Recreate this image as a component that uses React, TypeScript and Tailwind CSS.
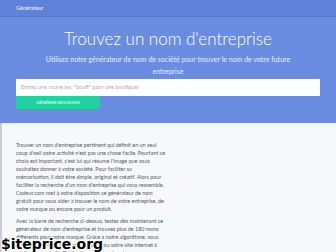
import React from "react";

const p1 = [
  "Trouver un nom d'entreprise pertinent qui définit en un seul",
  "coup d'oeil votre activité n'est pas une chose facile. Pourtant ce",
  "choix est important, c'est lui qui résume l'image que vous",
  "souhaitez donner à votre société. Pour faciliter sa",
  "mémorisation, il doit être simple, original et créatif. Alors pour",
  "faciliter la recherche d'un nom d'entreprise qui vous ressemble,",
  "Codeur.com met à votre disposition ce générateur de nom",
  "gratuit pour vous aider à trouver le nom de votre entreprise, de",
  "votre marque ou encore pour un produit.",
];
const p2 = [
  "Avec la barre de recherche ci-dessus, testez dès maintenant ce",
  "générateur de nom d'entreprise et trouvez plus de 180 noms",
  "différents pour votre marque. Grâce à notre algorithme, vous",
  "trouverez un nom pour votre société ou votre site internet à",
  "partir d'un mot-clé. Fini les heures pour chercher un nom pour",
];

export default function App() {
  return (
    <div className="relative w-[336px] h-[252px] overflow-hidden bg-[#f6f8fc]" style={{ fontFamily: "Lato, 'Open Sans', sans-serif" }}>
      <div className="h-[17px] bg-[#5f81d8] border-b border-[#5877cc] flex items-center pl-[16px]">
        <span className="text-[5.5px] text-white/90">Générateur</span>
      </div>
      <div className="bg-[#6a8de1] h-[106px] flex flex-col items-center">
        <h1 className="mt-[12px] text-[17px] leading-[20px] font-light text-white">Trouvez un nom d'entreprise</h1>
        <p className="mt-[4px] text-[7px] leading-[12px] text-[#e6ecfb] text-center w-[290px]">
          Utilisez notre générateur de nom de société pour trouver le nom de votre future<br />entreprise
        </p>
        <div className="self-stretch px-[16px] mt-[2px]">
          <div className="h-[17px] bg-white flex items-center pl-[5px] text-[5.5px] text-[#a8adb6]">
            Entrez une racine (ex: "bouff" pour une boutique)
          </div>
          <div className="w-[84px] h-[13px] bg-[#20d29f] flex items-center justify-center text-[4.6px] text-white tracking-tight">
            GÉNÉRER DES NOMS
          </div>
        </div>
      </div>
      <div className="border-l-2 border-[#c9ccd3] h-full pl-[14px] pt-[18px] text-[5.4px] leading-[8px] text-[#555a63]">
        <div>
          {p1.map((l, i) => (
            <div key={i} className="whitespace-nowrap">{l}</div>
          ))}
        </div>
        <div className="mt-[4px]">
          {p2.map((l, i) => (
            <div key={i} className="whitespace-nowrap">{l}</div>
          ))}
        </div>
      </div>
      <div
        className="absolute left-[1px] bottom-[0px] text-[14px] leading-[16px] font-bold text-black"
        style={{ fontFamily: "'DejaVu Sans', sans-serif", textShadow: "1px 0 #fff, -1px 0 #fff, 0 1px #fff, 0 -1px #fff, 1px 1px #fff, -1px -1px #fff, 1px -1px #fff, -1px 1px #fff" }}
      >
        $iteprice.org
      </div>
    </div>
  );
}
